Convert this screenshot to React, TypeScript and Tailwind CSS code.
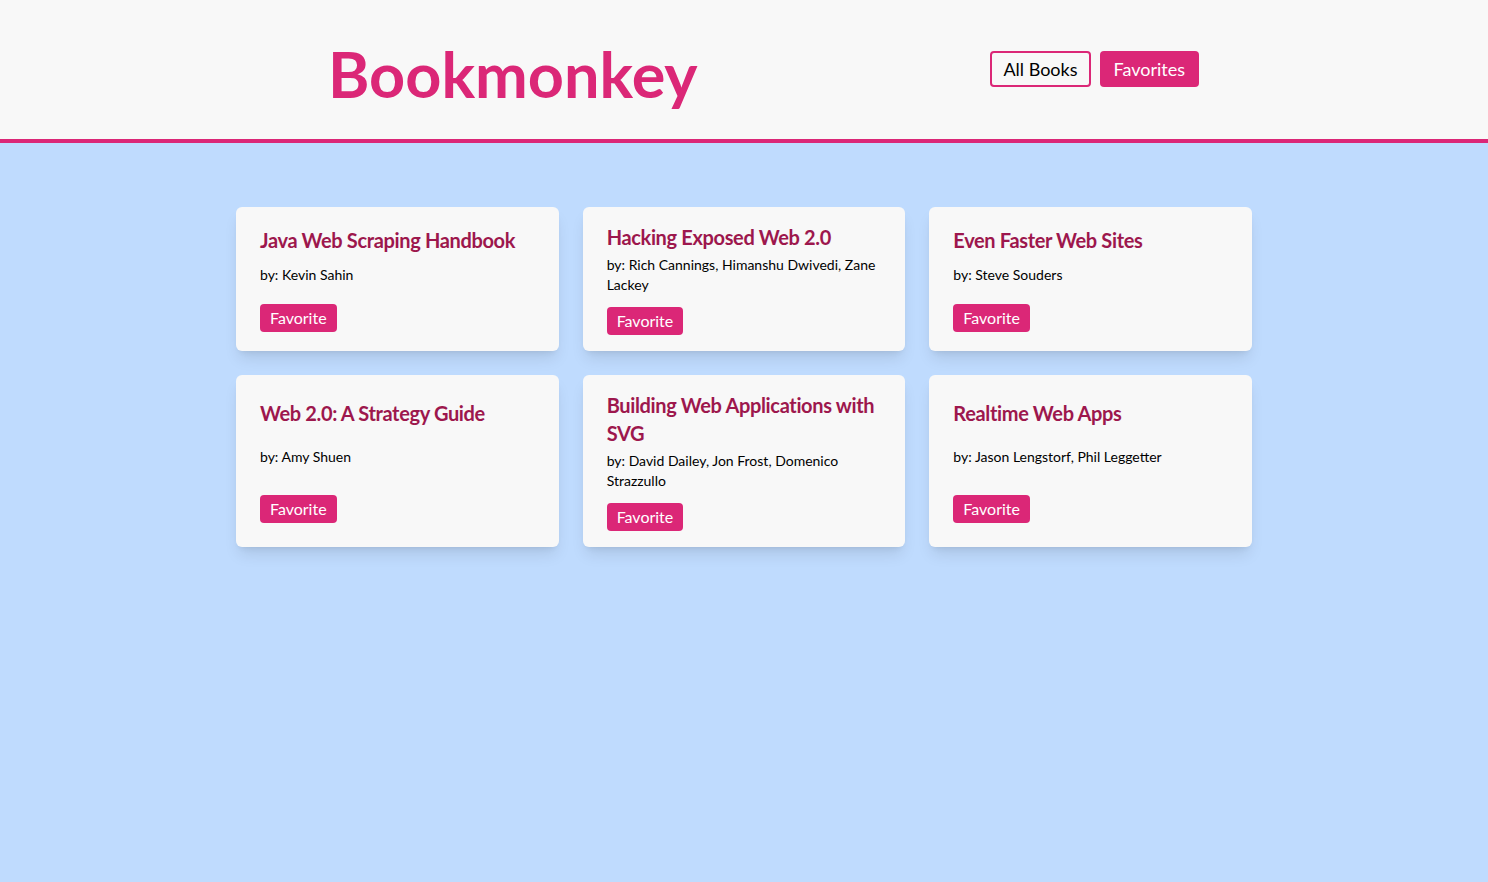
import React from "react";

const books = [
	{ title: "Java Web Scraping Handbook", authors: "Kevin Sahin" },
	{ title: "Hacking Exposed Web 2.0", authors: "Rich Cannings, Himanshu Dwivedi, Zane Lackey" },
	{ title: "Even Faster Web Sites", authors: "Steve Souders" },
	{ title: "Web 2.0: A Strategy Guide", authors: "Amy Shuen" },
	{ title: "Building Web Applications with SVG", authors: "David Dailey, Jon Frost, Domenico Strazzullo" },
	{ title: "Realtime Web Apps", authors: "Jason Lengstorf, Phil Leggetter" },
];

const BookCard: React.FC<{ title: string; authors: string }> = ({ title, authors }) => (
	<div className="flex flex-col justify-around items-start bg-[#f8f8f8] rounded-md shadow-lg px-6 py-4">
		<h2 className="text-xl leading-7 font-bold tracking-[-0.35px] text-[#9d174d] mb-1">{title}</h2>
		<p className="text-sm leading-5 text-black mb-3">by: {authors}</p>
		<button className="bg-[#db2777] text-white text-base leading-7 px-2.5 rounded">Favorite</button>
	</div>
);

export default function App() {
	return (
		<div className="min-h-[882px] bg-[#bfdbfe] font-['Lato','Open_Sans',sans-serif]">
			{/* Header */}
			<header className="h-[143px] bg-[#f8f8f8] border-b-4 border-[#db2777]">
				<div className="w-[1024px] mx-auto h-full flex items-center">
					<h1 className="ml-[96px] mt-2 text-[63px] leading-none font-bold text-[#db2777]">Bookmonkey</h1>
					<nav className="ml-auto mr-[57px] -mt-0.5 flex gap-[9px]">
						<button className="h-9 px-[11px] border-2 border-[#db2777] rounded bg-[#f8f8f8] text-lg text-black">All Books</button>
						<button className="h-9 px-3.5 rounded bg-[#db2777] text-lg text-white">Favorites</button>
					</nav>
				</div>
			</header>

			{/* Books */}
			<main className="w-[1016px] mx-auto pt-16 grid grid-cols-3 gap-6">
				{books.map((book, index) => (
					<BookCard key={index} title={book.title} authors={book.authors} />
				))}
			</main>
		</div>
	);
}
